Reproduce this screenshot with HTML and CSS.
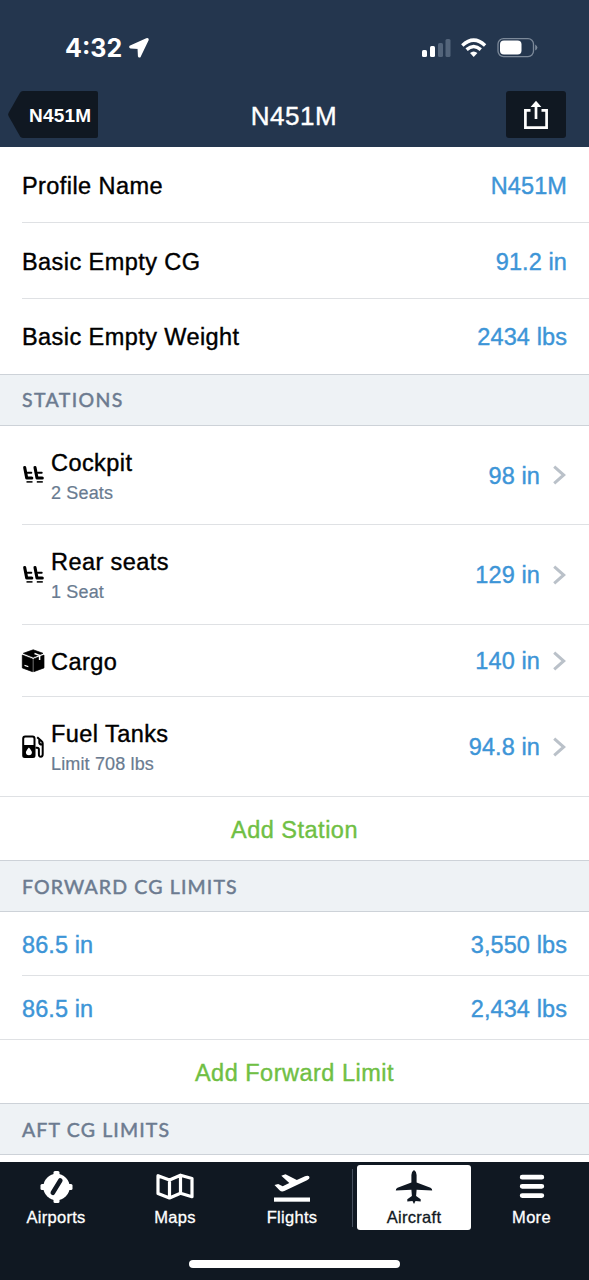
FILE: index.html
```html
<!DOCTYPE html>
<html lang="en">
<head>
<meta charset="utf-8">
<title>N451M</title>
<link rel="stylesheet" href="styles.css">
</head>
<body>
<div class="screen">
  <header class="header">
    <div class="status">
      <div class="clock">
        <span class="time">4:32</span>
        <svg class="location" width="22" height="22" viewBox="0 0 22 22"><path d="M18.600 2 2.500 9.300C1.800 9.900 2 10.600 2.700 10.700L10.400 11 10.800 19C11 19.800 11.600 19.900 12 19.200L19.800 2.900C20 2.200 19.400 1.700 18.600 2Z" fill="#fff" stroke="#fff" stroke-width="1.800" stroke-linejoin="round"/></svg>
      </div>
      <svg class="indicators" width="118" height="22" viewBox="0 0 118 22">
        <g fill="#fff"><rect x="3" y="13" width="5" height="7" rx="1.500"/><rect x="11" y="9" width="5" height="11" rx="1.500"/></g>
        <g fill="#53647a"><rect x="19" y="6" width="5" height="14" rx="1.500"/><rect x="26.500" y="2" width="5" height="18" rx="1.500"/></g>
        <g fill="none" stroke="#fff" stroke-width="3.400"><path d="M43.300 8.400Q54.700 -2.100 66.100 8.400"/><path d="M47.600 12.600Q54.700 6.400 61.800 12.600"/></g>
        <path d="M51 15.900Q54.700 12.900 58.400 15.900L54.700 19.900Z" fill="#fff"/>
        <rect x="79" y="1.600" width="35.500" height="18" rx="5.500" fill="none" stroke="#7c8999" stroke-width="1.300"/>
        <rect x="81" y="3.600" width="21.500" height="14" rx="4" fill="#fff"/>
        <path d="M116.200 7.400Q118.400 8.600 118.400 10.500T116.200 13.600Z" fill="#7c8999"/>
      </svg>
    </div>
    <div class="nav">
      <div class="back">
        <svg class="back-shape" width="90" height="47" viewBox="0 0 90 47"><path d="M15 0H88Q90 0 90 2V45Q90 47 88 47H15Q13 47 12 45.300L.5 25Q-.3 23.500 .5 22L12 1.700Q13 0 15 0Z" fill="#101822"/></svg>
        <span class="back-label">N451M</span>
      </div>
      <h1 class="title">N451M</h1>
      <div class="share">
        <svg width="26" height="30" viewBox="0 0 26 30"><g fill="none" stroke="#fff" stroke-width="2.700"><path d="M7.500 10.400H2.400V27.600H23.600V10.400H18.500"/><path d="M13 19V4"/></g><path d="M13 .8 18.400 7H7.600Z" fill="#fff"/></svg>
      </div>
    </div>
  </header>

  <main class="list">
    <div class="row profile"><span class="label">Profile Name</span><span class="value">N451M</span></div>
    <div class="row profile"><span class="label">Basic Empty CG</span><span class="value">91.2 in</span></div>
    <div class="row profile last"><span class="label">Basic Empty Weight</span><span class="value">2434 lbs</span></div>

    <h2 class="section stations">STATIONS</h2>
    <div class="row station first">
      <svg class="icon" width="24" height="24" viewBox="0 0 24 24"><g id="seats"><path d="M2.700 4.500 4.700 15H9.800M13 4.500 15 15H20.300" fill="none" stroke="#000" stroke-width="3.100" stroke-linecap="round" stroke-linejoin="round"/><path d="M5.500 9.800H9.300M15.900 9.800H19.700" stroke="#000" stroke-width="2" stroke-linecap="round"/><path d="M4.500 18.800H10.500M14.800 18.800H20.800" stroke="#222" stroke-width="1.700"/></g></svg>
      <div class="names"><span class="label">Cockpit</span><span class="sub">2 Seats</span></div>
      <span class="value">98 in</span>
      <svg class="chevron" width="13" height="20" viewBox="0 0 13 20"><path d="M1.200 1.700 10.700 10 1.200 18.300"/></svg>
    </div>
    <div class="row station">
      <svg class="icon" width="24" height="24" viewBox="0 0 24 24"><use href="#seats"/></svg>
      <div class="names"><span class="label">Rear seats</span><span class="sub">1 Seat</span></div>
      <span class="value">129 in</span>
      <svg class="chevron" width="13" height="20" viewBox="0 0 13 20"><path d="M1.200 1.700 10.700 10 1.200 18.300"/></svg>
    </div>
    <div class="row station short">
      <svg class="icon cargo" width="24" height="24" viewBox="0 0 24 24"><path d="M11.200 .8 21 4.300 11.200 8.300 1.300 4.300Z M.3 6.100 10.500 9.900V22.700L.3 18.900Z M11.700 9.900 22 6.100V18.900L11.700 22.700Z" fill="#000" stroke="#000" stroke-width=".7" stroke-linejoin="round"/><path d="M12.500 4.500 17.600 6.400V11" fill="none" stroke="#fff" stroke-width="1.500"/><path d="M2.500 15.700 6.300 17.100V18.300L2.500 17Z" fill="#fff"/></svg>
      <div class="names"><span class="label">Cargo</span></div>
      <span class="value">140 in</span>
      <svg class="chevron" width="13" height="20" viewBox="0 0 13 20"><path d="M1.200 1.700 10.700 10 1.200 18.300"/></svg>
    </div>
    <div class="row station full">
      <svg class="icon fuel" width="24" height="24" viewBox="0 0 24 24"><path fill-rule="evenodd" d="M3.200.5H10.500Q13.500.5 13.500 3.500V20.500Q13.500 23 11 23H2.700Q.2 23 .2 20.500V3.500Q.2.500 3.200.5ZM3.500 2.500Q2.200 2.500 2.200 3.800V10H11.500V3.800Q11.500 2.500 10.200 2.500ZM6.900 12.500Q3.900 16 3.900 17.300A3 3 0 0 0 9.900 17.300Q9.900 16 6.900 12.500Z" fill="#000"/><path d="M15.200 2.300 19.700 6.200Q20.700 7 20.700 8.500V19.300Q20.700 21.700 18.800 21.700T16.900 19.300V14.500Q16.900 12.700 15 12.700H13.500M17.300 4.500V7.500Q17.300 9.600 20 9.600" fill="none" stroke="#000" stroke-width="2"/></svg>
      <div class="names"><span class="label">Fuel Tanks</span><span class="sub">Limit 708 lbs</span></div>
      <span class="value">94.8 in</span>
      <svg class="chevron" width="13" height="20" viewBox="0 0 13 20"><path d="M1.200 1.700 10.700 10 1.200 18.300"/></svg>
    </div>
    <div class="add">Add Station</div>

    <h2 class="section">FORWARD CG LIMITS</h2>
    <div class="row limit"><span class="value">86.5 in</span><span class="value">3,550 lbs</span></div>
    <div class="row limit full"><span class="value">86.5 in</span><span class="value">2,434 lbs</span></div>
    <div class="add">Add Forward Limit</div>

    <h2 class="section">AFT CG LIMITS</h2>
  </main>

  <footer class="footer">
    <nav class="tabs">
      <div class="tab">
        <svg width="32" height="32" viewBox="0 0 32 32"><g fill="#fff"><circle cx="16.500" cy="16" r="13.200"/><rect x="13.500" y="0" width="6" height="32" rx="1.500"/><rect x=".5" y="13" width="32" height="6" rx="1.500"/></g><path d="M20.300 9.500 12.800 21.800" stroke="#101822" stroke-width="4.600" stroke-linecap="round"/></svg>
        <span>Airports</span>
      </div>
      <div class="tab">
        <svg width="38" height="32" viewBox="0 0 38 32"><path d="M2 4.700 13.500 9 24.500 4.200 36 7.500V25.700L24.500 22.300 13.500 27 2 22.600ZM13.500 9V27M24.500 4.200V22.300" fill="none" stroke="#fff" stroke-width="3.200" stroke-linejoin="round"/></svg>
        <span>Maps</span>
      </div>
      <div class="tab">
        <svg width="36" height="32" viewBox="0 0 36 32"><rect x="0" y="26.500" width="36" height="4.200" fill="#fff"/><path d="M.5 14 4.200 13 8.700 15.200 15.300 12 7.300 4.800 11.500 3.200 22.800 8.900 31 5.200Q34.500 4 35.500 6 36 7.800 33 9.300L10.300 20.100Q7.600 21.200 5.500 19.300Z" fill="#fff"/></svg>
        <span>Flights</span>
      </div>
      <div class="tab active">
        <svg width="36" height="34" viewBox="0 0 36 34"><path d="M18 0Q20.600 1.500 20.600 5V12.500L34.500 17.800Q36.500 18.800 36.200 20.600L20.600 19.800 20.100 26 24.700 29.300V31.400L19.500 30.900 18 34 16.500 30.900 11.300 31.400V29.300L15.900 26 15.400 19.800 -.2 20.600Q-.5 18.800 1.500 17.800L15.400 12.500V5Q15.400 1.500 18 0Z" fill="#101822"/></svg>
        <span>Aircraft</span>
      </div>
      <div class="tab">
        <svg width="26" height="32" viewBox="0 0 26 32"><path d="M3.200 6.200H22.800M3.200 15.300H22.800M3.200 24.600H22.800" stroke="#fff" stroke-width="4.800" stroke-linecap="round"/></svg>
        <span>More</span>
      </div>
    </nav>
    <div class="home-bar"></div>
  </footer>
</div>
</body>
</html>
```
FILE: styles.css
```css
* { box-sizing: border-box; }

body {
  margin: 0;
  background: #fff;
  font-family: "Liberation Sans", Arial, sans-serif;
  color: #000;
}

svg { display: block; flex: none; overflow: visible; }

.screen {
  display: flex;
  flex-direction: column;
  width: 589px;
  height: 1280px;
  overflow: hidden;
}

.header {
  flex: none;
  height: 147px;
  background: #24364e;
  color: #fff;
}

.status {
  display: flex;
  justify-content: space-between;
  padding: 37px 52px 0 65px;
  height: 91px;
}

.clock { display: flex; gap: 6px; }

.time {
  font: 700 25px/22px Inter, sans-serif;
  letter-spacing: 0;
}

.nav {
  display: grid;
  grid-template-columns: 90px 1fr 60px;
  grid-template-rows: 47px;
  padding: 0 23px 0 8px;
}

.back { display: grid; align-items: center; }

.back-shape, .back-label { grid-area: 1 / 1; }

.back-label {
  padding: 2px 0 0 21px;
  font-weight: 700;
  font-size: 19px;
  letter-spacing: 0.200px;
}

.title {
  margin: 0;
  text-align: center;
  font-weight: 400;
  font-size: 26px;
  line-height: 51px;
  letter-spacing: 0.500px;
  -webkit-text-stroke: 0.400px currentColor;
  transform: translateX(-8px);
}

.share {
  display: flex;
  justify-content: center;
  padding-top: 9px;
  background: #101822;
  border-radius: 3px;
}

.list { flex: none; height: 1015px; }

.row {
  display: flex;
  align-items: center;
  margin-left: 22px;
  padding-right: 22px;
  border-bottom: 1px solid #dfe1e4;
}

.profile { height: 76px; justify-content: space-between; padding-top: 2px; }
.profile.last { height: 75px; border-bottom: 0; padding-top: 0; }
.station { height: 100px; padding-right: 23px; }
.station.first { height: 99px; }
.station.short { height: 72px; }
.full { margin-left: 0; padding-left: 22px; }
.limit { height: 64px; justify-content: space-between; padding-top: 3px; }

.label, .value, .add {
  font-size: 23.500px;
  line-height: 28px;
  -webkit-text-stroke: 0.400px currentColor;
}

.label { letter-spacing: 0.430px; }
.value { color: #3d95d7; letter-spacing: 0.100px; }

.icon { width: 24px; margin-right: 5px; }
.station .value { margin-left: auto; padding-top: 1px; }

.names { display: flex; flex-direction: column; padding-top: 3px; }
.short .names { padding-top: 2px; }

.sub {
  margin-top: 4px;
  color: #697b90;
  font-size: 18px;
  line-height: 24px;
  letter-spacing: 0.150px;
  -webkit-text-stroke: 0.200px currentColor;
}

.chevron {
  margin-left: 13px;
  fill: none;
  stroke: #bac1c9;
  stroke-width: 3;
}

.section {
  height: 52px;
  margin: 0;
  padding-left: 22px;
  border: solid #cdd2d8;
  border-width: 1px 0;
  background: #eef2f5;
  color: #6c7b90;
  font: 400 19.500px/51px Lato, sans-serif;
  letter-spacing: 1.150px;
  -webkit-text-stroke: 0.500px currentColor;
}

.section.stations {
  line-height: 49px;
  letter-spacing: 1.400px;
}

.add {
  height: 63px;
  padding-top: 2px;
  text-align: center;
  line-height: 63px;
  color: #70bf44;
  letter-spacing: 0.500px;
}

.footer {
  flex: none;
  height: 118px;
  background: #101822;
  color: #fff;
}

.tabs {
  display: grid;
  grid-template-columns: 112px 126px 108px 136px 99px;
  height: 68px;
  padding-top: 3px;
}

.tab {
  display: flex;
  flex-direction: column;
  align-items: center;
  justify-content: space-between;
  padding: 6px 0 1px;
  font-size: 16.500px;
  line-height: 23px;
  letter-spacing: 0.300px;
  -webkit-text-stroke: 0.300px currentColor;
}

.tab.active {
  position: relative;
  justify-self: end;
  width: 114px;
  margin-right: 11px;
  padding-top: 5px;
  background: #fff;
  color: #101822;
  border-radius: 3px;
}

.tab.active::before {
  content: "";
  position: absolute;
  left: -5px;
  top: 4px;
  width: 1px;
  height: 58px;
  background: #46505f;
}

.home-bar {
  width: 211px;
  height: 8px;
  margin: 30px auto 0;
  border-radius: 4px;
  background: #fff;
}
```
